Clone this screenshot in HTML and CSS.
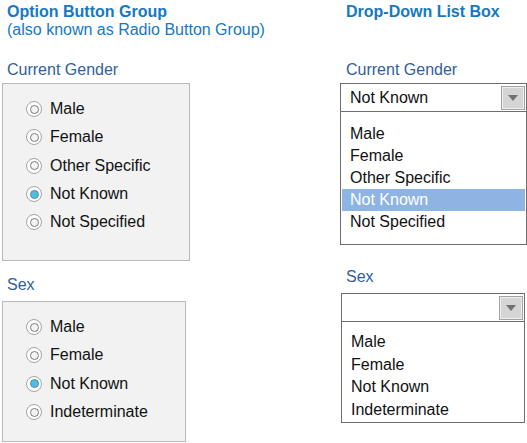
FILE: index.html
```html
<!DOCTYPE html>
<html>
<head>
<meta charset="utf-8">
<link rel="stylesheet" href="styles.css">
</head>
<body>
<div class="page">
  <section class="col col-left">
    <h1 class="title"><strong>Option Button Group</strong><br>(also known as Radio Button Group)</h1>
    <div class="label label-first">Current Gender</div>
    <div class="radio-box box-gender">
      <div class="radio-row"><span class="radio"></span>Male</div>
      <div class="radio-row"><span class="radio"></span>Female</div>
      <div class="radio-row"><span class="radio"></span>Other Specific</div>
      <div class="radio-row"><span class="radio on"></span>Not Known</div>
      <div class="radio-row"><span class="radio"></span>Not Specified</div>
    </div>
    <div class="label label-sex-left">Sex</div>
    <div class="radio-box box-sex">
      <div class="radio-row"><span class="radio"></span>Male</div>
      <div class="radio-row"><span class="radio"></span>Female</div>
      <div class="radio-row"><span class="radio on"></span>Not Known</div>
      <div class="radio-row"><span class="radio"></span>Indeterminate</div>
    </div>
  </section>
  <section class="col col-right">
    <h1 class="title"><strong>Drop-Down List Box</strong></h1>
    <div class="label label-first">Current Gender</div>
    <div class="dropdown dd-gender">
      <div class="dd-input"><span>Not Known</span><span class="dd-btn"><span class="dd-arrow"></span></span></div>
      <div class="dd-list">
        <div class="dd-item">Male</div>
        <div class="dd-item">Female</div>
        <div class="dd-item">Other Specific</div>
        <div class="dd-item sel">Not Known</div>
        <div class="dd-item">Not Specified</div>
      </div>
    </div>
    <div class="label label-sex-right">Sex</div>
    <div class="dropdown dd-sex">
      <div class="dd-input"><span></span><span class="dd-btn"><span class="dd-arrow"></span></span></div>
      <div class="dd-list">
        <div class="dd-item">Male</div>
        <div class="dd-item">Female</div>
        <div class="dd-item">Not Known</div>
        <div class="dd-item">Indeterminate</div>
      </div>
    </div>
  </section>
</div>
</body>
</html>
```

FILE: styles.css
```css
body {
  margin: 0;
  font-family: "Liberation Sans", Arial, sans-serif;
  font-size: 16px;
  color: #111;
  background: #fff;
}
.page {
  display: flex;
  padding-top: 3px;
}
.col-left {
  width: 340px;
  padding-left: 2px;
  box-sizing: border-box;
}
.col-right {
  width: 187px;
}
.title {
  margin: 0;
  height: 36px;
  padding-left: 5px;
  font-size: 16px;
  line-height: 18px;
  font-weight: normal;
  color: #1478c6;
}
.col-right .title {
  padding-left: 6px;
}
.title strong {
  font-weight: bold;
}
.label {
  line-height: 18px;
  color: #31609a;
  padding-left: 5px;
}
.col-right .label {
  padding-left: 6px;
}
.label-first {
  margin-top: 22px;
}
.label-sex-left {
  margin-top: 15px;
}
.label-sex-right {
  margin-top: 23px;
}
.radio-box {
  box-sizing: border-box;
  margin-top: 4px;
  padding: 11px 0 0 24px;
  background: #f2f2f2;
  border: 1px solid #bababa;
}
.box-gender {
  width: 188px;
  height: 178px;
}
.box-sex {
  margin-top: 7px;
  width: 184px;
  height: 141px;
}
.radio-row {
  display: flex;
  align-items: center;
  gap: 8px;
  height: 28.3px;
  line-height: 28.3px;
}
.radio {
  flex: none;
  box-sizing: border-box;
  width: 16px;
  height: 16px;
  margin-left: -1px;
  border-radius: 50%;
  border: 1px solid #a4a4a4;
  background: #fff;
  display: flex;
  align-items: center;
  justify-content: center;
}
.radio::after {
  content: "";
  box-sizing: border-box;
  width: 9px;
  height: 9px;
  border-radius: 50%;
  border: 1px solid #7c7c7c;
  background: #f4f4f4;
}
.radio.on::after {
  background: #4bbfe2;
  border-color: #5f8aa0;
}
.dropdown {
  box-sizing: border-box;
  border: 1px solid #6e6e6e;
  background: #fff;
}
.dd-gender {
  margin-top: 4px;
  width: 187px;
}
.dd-sex {
  margin-top: 7px;
  margin-left: 1px;
  width: 184px;
}
.dd-input {
  height: 27px;
  line-height: 27px;
  border-bottom: 1px solid #6e6e6e;
  display: flex;
  align-items: center;
  justify-content: space-between;
  padding: 0 1px 0 9px;
}
.dd-btn {
  box-sizing: border-box;
  width: 24px;
  height: 24px;
  border: 1px solid #a2a2a2;
  background: #d5d5d5;
  box-shadow: inset 0 0 0 1px #efefef;
  display: flex;
  align-items: center;
  justify-content: center;
}
.dd-arrow {
  width: 0;
  height: 0;
  border-left: 5px solid transparent;
  border-right: 5px solid transparent;
  border-top: 6px solid #727272;
}
.dd-list {
  padding: 11px 0 11px;
}
.dd-item {
  line-height: 22px;
  margin: 0 1px;
  padding-left: 8px;
}
.dd-item.sel {
  background: #8db4e2;
  color: #fff;
}
.dd-sex .dd-list {
  box-sizing: border-box;
  height: 100px;
  padding: 9px 0 0;
}
.dd-sex .dd-item {
  line-height: 22.7px;
}
```
